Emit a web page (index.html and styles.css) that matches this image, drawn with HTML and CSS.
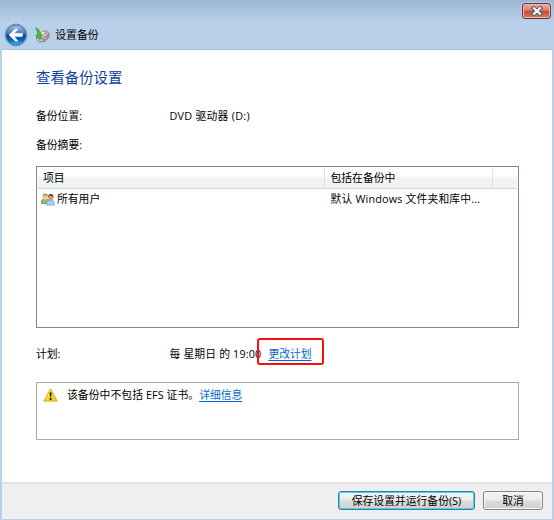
FILE: index.html
```html
<!DOCTYPE html>
<html lang="zh-CN">
<head>
<meta charset="utf-8">
<title>设置备份</title>
<link rel="stylesheet" href="styles.css">
</head>
<body>
<div class="window">
  <header class="titlebar">
    <div class="caption">
      <button class="close" aria-label="关闭">
        <svg width="12" height="10" viewBox="0 0 12 10"><path d="M2.8 2.2L9.2 7.8M9.2 2.2L2.8 7.8" stroke="#555c70" stroke-width="4" stroke-linecap="square"/><path d="M3 2.2L9 7.8M9 2.2L3 7.8" stroke="#fff" stroke-width="2.2" stroke-linecap="square"/></svg>
      </button>
    </div>
    <div class="nav">
      <svg class="back" width="24" height="24" viewBox="0 0 24 24">
        <defs>
          <linearGradient id="ball" x1="0" y1="0" x2="0" y2="1"><stop offset="0" stop-color="#a9c5e5"/><stop offset=".46" stop-color="#3d73b8"/><stop offset=".5" stop-color="#073b87"/><stop offset=".75" stop-color="#0866ba"/><stop offset="1" stop-color="#20c8f8"/></linearGradient>
        </defs>
        <circle cx="12" cy="12" r="11" fill="#dcebf9" stroke="#5f7fa9" stroke-width=".8"/>
        <circle cx="12" cy="12" r="10" fill="url(#ball)" stroke="#28548e" stroke-width=".8"/>
        <path d="M5 12L11.2 5.9H14L10.2 10.4H18.4V13.6H10.2L14 18.1H11.2Z" fill="#fff" stroke="#fff" stroke-width=".5" stroke-linejoin="round"/>
      </svg>
      <svg class="app" width="15" height="16" viewBox="0 0 15 16">
        <path d="M1.5 9.5L5 7.5L10 10.5V14.6L4.5 14.8L1.5 12.5Z" fill="#8c9398" stroke="#646b70" stroke-width=".6"/>
        <path d="M2 12L4.5 13.2L9.5 12.8" stroke="#e8ece8" stroke-width="1" fill="none"/>
        <circle cx="9.7" cy="8.4" r="4.5" fill="#b5b1b8" stroke="#77787f" stroke-width=".9"/>
        <path d="M9.7 8.4L5.9 6.4A4.3 4.3 0 0 1 9 4.2Z" fill="#ece9e4"/>
        <path d="M9.7 8.4L13.9 7.7A4.3 4.3 0 0 1 11.5 12.2Z" fill="#b98585"/>
        <circle cx="9.7" cy="8.4" r="1.4" fill="#fff" stroke="#8a6c70" stroke-width=".8"/>
        <path d="M.6 1C3.6 1.2 5 3.6 5 7H6.6L4.6 12.4L.8 8.2H2.5C2.5 5 2 3 .6 1Z" fill="#45c52c" stroke="#279e25" stroke-width=".6"/>
      </svg>
      <span class="name">设置备份</span>
    </div>
  </header>
  <main class="page">
    <h1>查看备份设置</h1>
    <div class="row location"><span class="label">备份位置:</span><span class="drive">DVD 驱动器 (D:)</span></div>
    <div class="row summary"><span class="label">备份摘要:</span></div>
    <div class="list">
      <div class="cols head"><span class="c1">项目</span><span class="c2">包括在备份中</span><span class="c3"></span></div>
      <div class="cols item">
        <span class="c1">
          <svg width="14" height="13" viewBox="0 0 14 13">
            <path d="M.5 10.7V8Q.5 6 3.2 6H6Q8 6 8 9V10.7Z" fill="#8eb879" stroke="#537e48" stroke-width=".6"/>
            <ellipse cx="4.5" cy="3.8" rx="2.7" ry="3.1" fill="#f3cc8d"/>
            <path d="M1.8 4Q1.2.6 4.3.5Q7 .7 6.5 3L3.6 2.2Z" fill="#b98d43"/>
            <path d="M5.8 12.2V9.8Q6 7.5 8 7.4H11Q13.2 7.5 13.4 9.8V12.2Z" fill="#a5d1f5" stroke="#5f9bd1" stroke-width=".6"/>
            <ellipse cx="9.7" cy="4.8" rx="2.5" ry="3.1" fill="#d09a70"/>
            <path d="M7 4.5Q6.8 1.2 9.8 1.1Q13 1.3 12.4 5L11.4 3L8.5 2.6Z" fill="#533e32"/>
          </svg>所有用户</span>
        <span class="c2 included">默认 Windows 文件夹和库中...</span>
      </div>
    </div>
    <div class="row plan"><span class="label">计划:</span><span class="when">每 星期日 的 19:00</span><span class="change"><a href="#">更改计划</a><i class="mark"></i></span></div>
    <div class="notice">
      <svg width="15" height="14" viewBox="0 0 15 14"><defs><linearGradient id="warn" x1="0" y1="0" x2="1" y2="1"><stop offset="0" stop-color="#fff15c"/><stop offset="1" stop-color="#f3c600"/></linearGradient></defs><path d="M7.5 .8L14.2 13.1H.8Z" fill="url(#warn)" stroke="#d3ad22" stroke-width="1" stroke-linejoin="round"/><path d="M6.6 4.5H8.6L8.1 9H7.1Z" fill="#171500"/><circle cx="7.6" cy="10.9" r="1.1" fill="#171500"/></svg>
      <span class="msg">该备份中不包括 EFS 证书。</span><a href="#">详细信息</a>
    </div>
  </main>
  <footer class="actions">
    <button class="btn primary">保存设置并运行备份(S)</button>
    <button class="btn cancel">取消</button>
  </footer>
</div>
</body>
</html>
```
FILE: styles.css
```css
* { box-sizing: border-box; }
body {
  margin: 0;
  color: #000;
  font: 10.8px/16px "Open Sans", "Noto Sans CJK SC", sans-serif;
  white-space: nowrap;
}
svg { flex: none; fill: none; }
button { font: inherit; color: inherit; padding: 0; }
a { color: #0868ce; text-decoration: underline; text-underline-offset: 1.5px; }
.window {
  width: 554px;
  height: 520px;
  display: flex;
  flex-direction: column;
  padding: 0 2px 1px;
  background: linear-gradient(#9cb6d3 0, #b9d0ea 22px, #b9d0ea 100%);
}
.titlebar { height: 50px; border-bottom: 1px solid #a9c3dd; }
.caption { height: 22px; display: flex; justify-content: flex-end; padding: 3px 1px 0 0; }
.close {
  width: 29px;
  height: 16px;
  display: flex;
  align-items: center;
  justify-content: center;
  border: 1px solid #63334a;
  border-radius: 3px;
  background: linear-gradient(#e7aaa0 0, #d98172 45%, #c34b32 50%, #d77b66 100%);
  box-shadow: inset 0 0 0 1px #edb8ae, 0 0 0 1px #b8cce3;
}
.nav { height: 26px; display: flex; align-items: center; padding-left: 2px; }
.app { margin: 0 0 0 7px; }
.name { margin-left: 5.3px; }
.page { flex: 1; background: #fff; padding: 0 33px 0 34px; }
h1 {
  margin: 16px 0 0;
  height: 24px;
  color: #123f9f;
  font-size: 14.4px;
  line-height: 24px;
  font-weight: 400;
}
.row { display: flex; height: 16px; }
.label { width: 133.5px; }
.drive { letter-spacing: .27px; }
.included { letter-spacing: .17px; }
.when { letter-spacing: .15px; }
.location { margin-top: 18px; }
.summary { margin-top: 13px; }
.list { height: 162px; margin-top: 13px; border: 1px solid #81858e; padding: 1px; }
.cols { display: flex; align-items: center; }
.c1 { width: 287px; padding-left: 5px; }
.c2 { width: 168px; padding-left: 5.5px; }
.c3 { flex: 1; }
.head { height: 21px; border-bottom: 1px solid #d5d5d5; background: linear-gradient(#fff 0, #fff 40%, #f2f3f5 50%, #f0f1f3 100%); }
.head span { height: 20px; line-height: 20px; }
.head .c1, .head .c2 { border-right: 1px solid #dfe0e3; }
.item { height: 20px; }
.item .c1 { display: flex; align-items: center; padding-left: 3px; gap: 2px; }
.plan { margin-top: 18px; }
.change { position: relative; margin-left: 7px; }
.mark {
  position: absolute;
  left: -11px;
  top: -8px;
  width: 67px;
  height: 27px;
  border: 2px solid #fa0d0d;
  border-radius: 3px;
}
.notice {
  display: flex;
  align-items: flex-start;
  height: 58px;
  margin-top: 20px;
  padding: 4px 0 0 6px;
  border: 1px solid #a9aaac;
}
.notice svg { margin: 1px 9px 0 0; }
.msg { letter-spacing: .07px; }
.actions {
  display: flex;
  justify-content: flex-end;
  gap: 8px;
  height: 37px;
  padding: 7px 9px 0 0;
  border-top: 2px solid #e3e3e3;
  background: #efefef;
}
.btn {
  height: 19px;
  line-height: 16px;
  border: 1px solid #858585;
  border-radius: 3px;
  background: linear-gradient(#f3f3f3 0, #ebebeb 48%, #dcdcdc 52%, #d0d0d0 100%);
  box-shadow: inset 0 0 0 1px #f8f8f8;
}
.primary { width: 137px; border-color: #397d9e; box-shadow: inset 0 0 0 1px #48d0f7; }
.cancel { width: 60px; }
```
